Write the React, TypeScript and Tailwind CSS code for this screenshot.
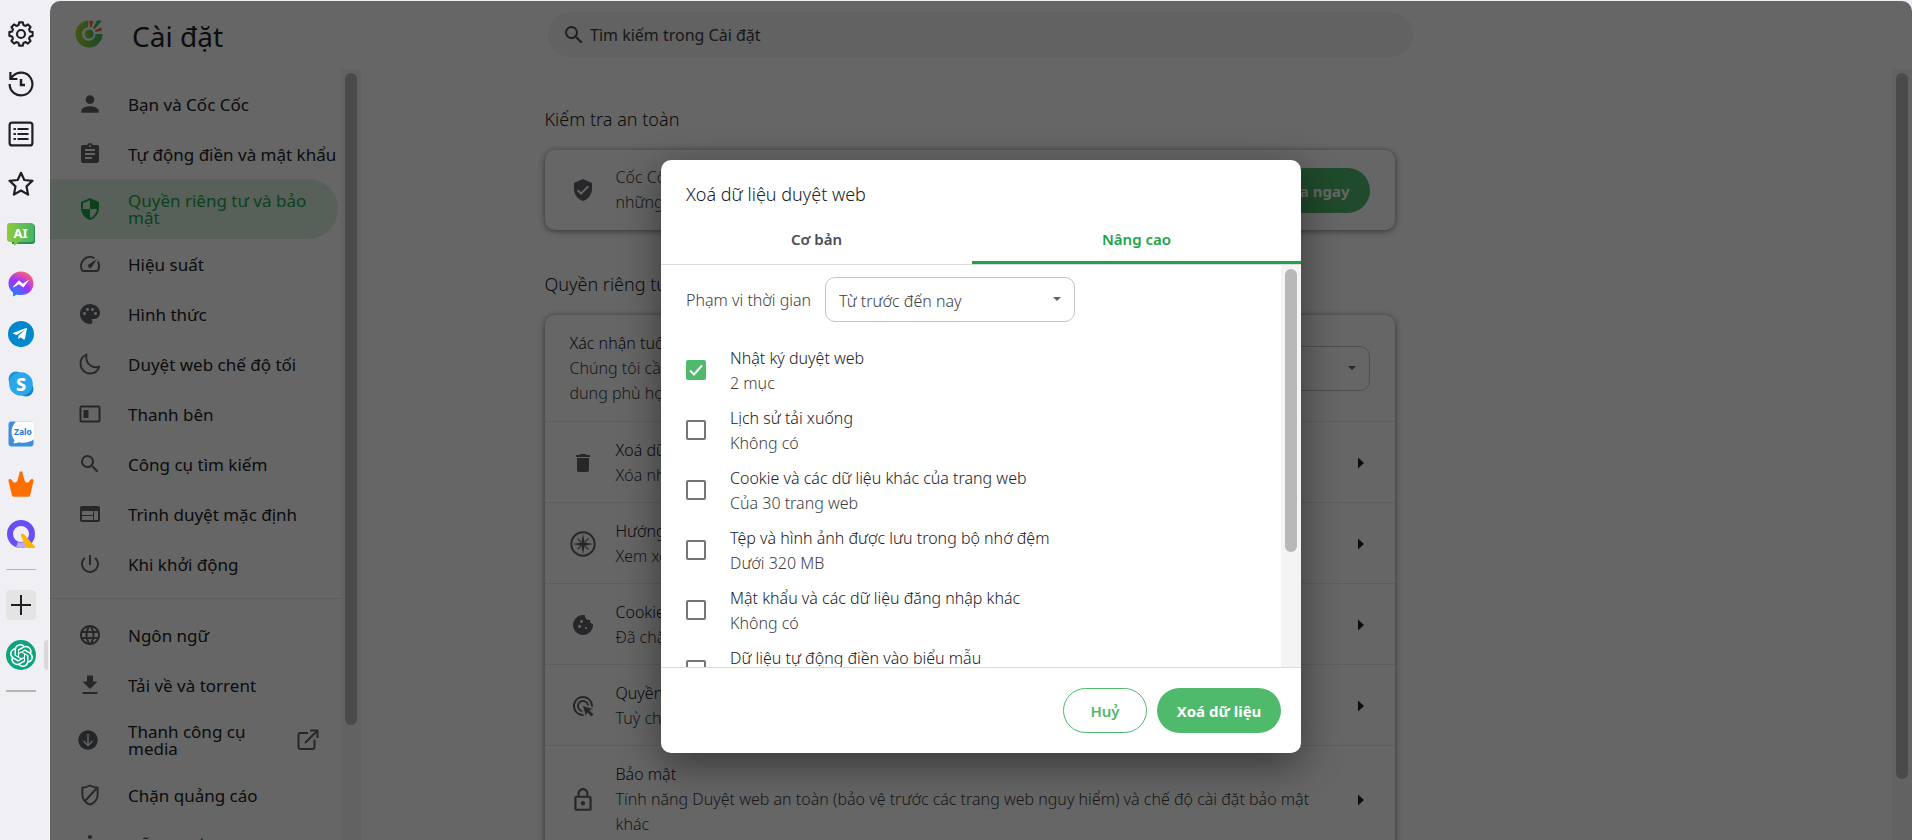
import React, { useState } from "react";
import {
  MdPerson,
  MdAssignment,
  MdSecurity,
  MdOutlineSpeed,
  MdPalette,
  MdSearch,
  MdWeb,
  MdPowerSettingsNew,
  MdLanguage,
  MdAccessibility,
  MdVerifiedUser,
  MdDelete,
  MdCookie,
  MdAdsClick,
  MdLockOutline,
} from "react-icons/md";
import { FaTelegramPlane } from "react-icons/fa";
import { SiOpenai } from "react-icons/si";

// ---------- icons ----------

// eight teeth, four points for each one
const gearPoints = Array.from({ length: 32 }, (_, i) => {
  const tooth = Math.floor(i / 4);
  const offsets = [-15, -9, 9, 15];
  const r = i % 4 === 0 || i % 4 === 3 ? 9.3 : 11.8;
  const angle = ((tooth * 45 + offsets[i % 4]) * Math.PI) / 180;
  return `${(13 + r * Math.sin(angle)).toFixed(2)},${(13 - r * Math.cos(angle)).toFixed(2)}`;
}).join(" ");

const GearIcon = () => (
  <svg viewBox="0 0 26 26" className="size-[26px]" fill="none" stroke="#1f2023" strokeWidth="2.1" strokeLinejoin="round">
    <polygon points={gearPoints} />
    <circle cx="13" cy="13" r="4" />
  </svg>
);

const HistoryIcon = () => (
  <svg viewBox="0 0 26 26" className="size-[26px]" fill="none" stroke="#1f2023" strokeWidth="2.2">
    <path d="M1.6 13a11.4 11.4 0 1 0 3.2-7.9L2.4 7.4" />
    <path d="M2.4 1v7h7" />
    <path d="M13 8v6h4" strokeWidth="2.5" />
  </svg>
);

const ListIcon = () => (
  <svg viewBox="0 0 26 26" className="size-[26px]" fill="none" stroke="#1f2023" strokeWidth="2.2">
    <rect x="1.6" y="1.6" width="22.8" height="22.8" rx="2.5" />
    <path d="M9.5 8h11M9.5 13h11M9.5 18h11" />
    <path d="M5.5 8h2.4M5.5 13h2.4M5.5 18h2.4" />
  </svg>
);

const StarIcon = () => (
  <svg viewBox="0 0 26 26" className="size-[26px]" fill="none" stroke="#1f2023" strokeWidth="2.2" strokeLinejoin="round">
    <path d="M13 1.800l3.300 7.200 8.200.8-6 5.600 1.600 8.200-7.100-4.100-7.100 4.100 1.600-8.200-6-5.600 8.200-.8z" />
  </svg>
);

const AiIcon = () => (
  <svg viewBox="0 0 28 26" className="h-[26px] w-7">
    <defs>
      <linearGradient id="ai" x1="0" x2="1">
        <stop offset="0" stopColor="#8fc93a" />
        <stop offset="1" stopColor="#45b56a" />
      </linearGradient>
    </defs>
    <path d="M4 3h21a3 3 0 0 1 3 3v14a3 3 0 0 1-3 3H5z" fill="#2e8b57" />
    <path d="M3 2h21a3 3 0 0 1 3 3v13a3 3 0 0 1-3 3H12l-5 4v-4H3a3 3 0 0 1-3-3V5a3 3 0 0 1 3-3z" fill="url(#ai)" />
    <text x="13.500" y="16.500" fontSize="13" fontWeight="700" fill="#fff" textAnchor="middle">AI</text>
  </svg>
);

const MessengerIcon = () => (
  <svg viewBox="0 0 26 26" className="size-[26px]">
    <defs>
      <radialGradient id="msg" cx="0.2" cy="1" r="1.1">
        <stop offset="0" stopColor="#0a8cff" />
        <stop offset="0.600" stopColor="#a033ff" />
        <stop offset="1" stopColor="#ff6470" />
      </radialGradient>
    </defs>
    <path d="M13 0.500C5.900.5.500 5.600.5 12.500c0 3.700 1.600 6.900 4.500 9v4l4-2c1.200.4 2.600.6 4 .6 7.100 0 12.500-5 12.500-11.600S20.100.5 13 .5z" fill="url(#msg)" />
    <path d="M5.500 16l5.300-6.200 4 3.400 5.500-3.700-5 6.500-4.300-3.300z" fill="#fff" stroke="#fff" strokeWidth="1" strokeLinejoin="round" />
  </svg>
);

const SkypeIcon = () => (
  <svg viewBox="0 0 26 26" className="size-[26px]">
    <circle cx="8" cy="8" r="7.500" fill="#1b93d8" />
    <circle cx="18" cy="18" r="7.500" fill="#1483c4" />
    <circle cx="13" cy="13" r="11.800" fill="#28a8ea" />
    <text x="13" y="19.500" fontSize="18" fontWeight="800" fill="#fff" textAnchor="middle">S</text>
  </svg>
);

const ZaloIcon = () => (
  <svg viewBox="0 0 26 26" className="size-[26px]">
    <rect x="0.500" y="0.500" width="25" height="25" rx="3" fill="#3b8fdc" />
    <path d="M8 .5h15a3 3 0 0 1 3 3V18c-4 3.500-10 4.500-15 3.200-2 .9-4 1.100-6 .8 1.200-1 1.600-2 1.400-3C2.300 14.500 2.500 6 8 .5z" fill="#fff" />
    <text x="15" y="14" fontSize="8.500" fontWeight="700" fill="#1f78d1" textAnchor="middle">Zalo</text>
  </svg>
);

const CrownIcon = () => (
  <svg viewBox="0 0 26 26" className="size-[26px]" fill="#ff6f00">
    <path d="M.4 9.500C.8 7.600 2.800 7.600 3.800 9c1 1.600 1.800 2.600 3.200 2.600 1.600 0 2.300-1.500 2.900-3.500l1.700-6.800c.4-1.300 2.400-1.300 2.800 0l1.700 6.800c.6 2 1.300 3.500 2.900 3.500 1.400 0 2.200-1 3.200-2.600 1-1.400 3-1.400 3.400.5l-3.400 14.500c-.3 1.200-.9 1.700-2 1.700H5.800c-1.100 0-1.700-.5-2-1.700z" />
  </svg>
);

const QIcon = () => (
  <svg viewBox="0 0 28 28" className="size-7">
    <circle cx="14" cy="14" r="11" fill="none" stroke="#6a4df5" strokeWidth="6" />
    <path d="M10 24.500a11 11 0 0 0 9 -.6" fill="none" stroke="#b9acf8" strokeWidth="5.500" />
    <path d="M14 13.500l3 .8 11 12.500c.4.700 0 1.200-.8 1.200h-7.500L14 16z" fill="#ffb400" />
  </svg>
);

const LogoIcon = () => (
  <svg viewBox="0 0 28 28" className="size-7">
    <defs>
      <linearGradient id="logo" x1="0" x2="1">
        <stop offset="0" stopColor="#a6d82b" />
        <stop offset="1" stopColor="#3fb765" />
      </linearGradient>
    </defs>
    <path d="M13.500.5A13.500 13.500 0 1 0 27.500 14L20.500 14A6.800 6.800 0 1 1 13.300 7.200z" fill="url(#logo)" />
    <circle cx="14" cy="14" r="4.600" fill="url(#logo)" />
    <path d="M14.600 1h3.600l-1.600 6.500h-1.400z" fill="#ff5a3c" />
    <path d="M22 .5h5l-7.500 8.800-1.600-1.100z" fill="#3fb765" />
    <path d="M26.500 7.200v3.600l-6 1.200-.5-1.600z" fill="#ff5a3c" />
  </svg>
);

const MoonIcon = () => (
  <svg viewBox="0 0 24 24" className="size-6" fill="none" stroke="currentColor" strokeWidth="1.900" strokeLinejoin="round">
    <path d="M8.500 2.500C5 4 2.500 7.500 2.500 11.800c0 5.300 4.200 9.700 9.500 9.700 4.200 0 8-2.700 9.300-7-5.600 2.500-14.600-1.800-12.800-12z" />
  </svg>
);

const SidePanelIcon = () => (
  <svg viewBox="0 0 24 24" className="size-6">
    <rect x="2.500" y="4.500" width="19" height="15" rx="1" fill="none" stroke="currentColor" strokeWidth="2" />
    <path d="M5.500 8h5v8h-5z" fill="currentColor" />
  </svg>
);

const DownloadIcon = () => (
  <svg viewBox="0 0 24 24" className="size-6" fill="currentColor">
    <path d="M9 2.500h6v6h4.500L12 16 4.500 8.500H9zM4.500 19h15v2h-15z" />
  </svg>
);

const MediaIcon = () => (
  <svg viewBox="0 0 24 24" className="-ml-1 size-6">
    <circle cx="12" cy="12" r="9.800" fill="currentColor" />
    <path d="M12 6v11.500M7.500 13l4.500 4.500 4.500-4.500" fill="none" stroke="#fff" strokeWidth="1.400" />
  </svg>
);

const ExternalIcon = () => (
  <svg viewBox="0 0 24 24" className="size-6" fill="none" stroke="currentColor" strokeWidth="2">
    <path d="M12 5H4.500C3 5 2.500 5.500 2.500 7v12c0 1.500.5 2 2 2h12c1.500 0 2-.5 2-2v-7.500" />
    <path d="M14 2.500h7.500V10M21.500 2.500L9 15" />
  </svg>
);

const AdblockIcon = () => (
  <svg viewBox="0 0 24 24" className="size-6" fill="none" stroke="currentColor" strokeWidth="1.900">
    <path d="M12 2.500c-2.500 1.400-5 2-7.600 2.200V12c0 4.500 3.500 8 7.600 9.700 4.100-1.700 7.600-5.200 7.600-9.700V4.700C17 4.500 14.500 3.900 12 2.500z" />
    <path d="M18.500 5.500L7 18" />
  </svg>
);

const CompassIcon = () => (
  <svg viewBox="0 0 24 24" className="size-[26px] shrink-0" fill="none" stroke="currentColor" strokeWidth="1.800">
    <circle cx="12" cy="12" r="10.800" />
    <path d="M12 2.500l1.500 8L21.500 12l-8 1.500L12 21.500l-1.500-8L2.500 12l8-1.500z" fill="currentColor" stroke="none" />
    <path d="M7 7l3 3M17 7l-3 3M7 17l3-3M17 17l-3-3" strokeWidth="1.100" />
  </svg>
);

const ArrowRight = () => (
  <svg viewBox="0 0 6 12" className="h-3 w-1.5 shrink-0" fill="#202124">
    <path d="M0 0.500l6 5.500-6 5.500z" />
  </svg>
);

// ---------- data ----------

const railApps = [
  { name: "Cài đặt", icon: <GearIcon /> },
  { name: "Lịch sử", icon: <HistoryIcon /> },
  { name: "Danh sách đọc", icon: <ListIcon /> },
  { name: "Dấu trang", icon: <StarIcon /> },
  { name: "AI", icon: <AiIcon /> },
  { name: "Messenger", icon: <MessengerIcon /> },
  {
    name: "Telegram",
    icon: (
      <span className="flex size-[26px] items-center justify-center rounded-full bg-[#0088cc] pr-0.5 text-white">
        <FaTelegramPlane size={16} />
      </span>
    ),
  },
  { name: "Skype", icon: <SkypeIcon /> },
  { name: "Zalo", icon: <ZaloIcon /> },
  { name: "Crown", icon: <CrownIcon /> },
  { name: "Q", icon: <QIcon /> },
];

const menu = [
  { label: "Bạn và Cốc Cốc", icon: <MdPerson size={26} /> },
  { label: "Tự động điền và mật khẩu", icon: <MdAssignment size={24} /> },
  { label: "Quyền riêng tư và bảo mật", icon: <MdSecurity size={24} />, active: true },
  { label: "Hiệu suất", icon: <MdOutlineSpeed size={24} /> },
  { label: "Hình thức", icon: <MdPalette size={24} /> },
  { label: "Duyệt web chế độ tối", icon: <MoonIcon /> },
  { label: "Thanh bên", icon: <SidePanelIcon /> },
  { label: "Công cụ tìm kiếm", icon: <MdSearch size={24} /> },
  { label: "Trình duyệt mặc định", icon: <MdWeb size={24} /> },
  { label: "Khi khởi động", icon: <MdPowerSettingsNew size={24} /> },
];

const menuMore = [
  { label: "Ngôn ngữ", icon: <MdLanguage size={24} /> },
  { label: "Tải về và torrent", icon: <DownloadIcon /> },
  { label: "Thanh công cụ media", icon: <MediaIcon />, external: true },
  { label: "Chặn quảng cáo", icon: <AdblockIcon /> },
  { label: "Hỗ trợ tiếp cận", icon: <MdAccessibility size={24} /> },
];

const privacyRows = [
  { title: "Xoá dữ liệu duyệt web", text: "Xóa nhật ký, cookie, bộ nhớ đệm và nhiều dữ liệu khác", icon: <MdDelete size={24} /> },
  { title: "Hướng dẫn về quyền riêng tư", text: "Xem xét các chế độ kiểm soát quan trọng", icon: <CompassIcon /> },
  { title: "Cookie của bên thứ ba", text: "Đã chặn cookie của bên thứ ba", icon: <MdCookie size={24} /> },
  { title: "Quyền của trang web", text: "Tuỳ chọn kiểm soát thông tin mà trang web có thể dùng", icon: <MdAdsClick size={24} /> },
  {
    title: "Bảo mật",
    text: "Tính năng Duyệt web an toàn (bảo vệ trước các trang web nguy hiểm) và chế độ cài đặt bảo mật khác",
    icon: <MdLockOutline size={26} />,
  },
];

const dataTypes = [
  { id: "history", title: "Nhật ký duyệt web", text: "2 mục" },
  { id: "downloads", title: "Lịch sử tải xuống", text: "Không có" },
  { id: "cookies", title: "Cookie và các dữ liệu khác của trang web", text: "Của 30 trang web" },
  { id: "cache", title: "Tệp và hình ảnh được lưu trong bộ nhớ đệm", text: "Dưới 320 MB" },
  { id: "passwords", title: "Mật khẩu và các dữ liệu đăng nhập khác", text: "Không có" },
  { id: "forms", title: "Dữ liệu tự động điền vào biểu mẫu", text: "Không có" },
];

// ---------- parts ----------

const Scrollbar = ({ thumb }: { thumb: string }) => (
  <div className="w-5 shrink-0 bg-[#f4f4f4] px-1 pt-1">
    <div className={`w-3 rounded-full bg-[#b8b8b8] ${thumb}`} />
  </div>
);

const SelectBox = ({ id, value, width }: { id: string; value: string; width: string }) => (
  <div className={`relative ${width}`}>
    <select
      id={id}
      aria-label={value}
      className="h-[45px] w-full appearance-none rounded-[10px] border border-[#c4c4c4] bg-white px-[13px] pt-0.5 text-base text-[#3c4043]"
    >
      <option>{value}</option>
    </select>
    <svg viewBox="0 0 8 4" className="pointer-events-none absolute top-5 right-3.5 h-1 w-2" fill="#5f6368">
      <path d="M0 0h8L4 4z" />
    </svg>
  </div>
);

const MenuItem = ({ item }) => (
  <a
    href="#"
    className={`flex w-72 items-center pl-[27px] ${
      item.active ? "h-[60px] rounded-r-full bg-[#dcefe2] text-[#1ea446]" : "text-[#202124]"
    } ${item.external ? "h-[60px]" : "h-[50px]"}`}
  >
    <span className={`flex w-[26px] shrink-0 justify-center ${item.active ? "" : "text-[#5f6368]"}`}>{item.icon}</span>
    <span className={`ml-[25px] text-[17px] leading-[17px] ${item.external ? "w-[140px]" : item.active ? "w-[190px]" : "whitespace-nowrap"}`}>
      {item.label}
    </span>
    {item.external && (
      <span className="ml-7 text-[#5f6368]">
        <ExternalIcon />
      </span>
    )}
  </a>
);

const Rail = () => (
  <nav className="flex w-[50px] shrink-0 flex-col bg-[#f0eff4] pt-[9px]">
    {railApps.map((app) => (
      <button key={app.name} aria-label={app.name} className="flex h-[50px] w-[41px] items-center justify-center">
        {app.icon}
      </button>
    ))}
    <div className="mx-1.5 mt-[10px] h-px w-[30px] bg-[#b5b5b5]" />
    <button aria-label="Thêm" className="mt-5 ml-1.5 flex size-[30px] items-center justify-center rounded bg-[#e4e4e4]">
      <svg viewBox="0 0 20 20" className="size-5" stroke="#1f2023" strokeWidth="2">
        <path d="M10 0v20M0 10h20" />
      </svg>
    </button>
    <div className="mt-5 flex justify-between pr-0.5 pl-1.5">
      <button aria-label="ChatGPT" className="flex size-[30px] items-center justify-center rounded-full bg-[#10a37f] text-white">
        <SiOpenai size={23} />
      </button>
      <div className="w-1 rounded-l bg-[#d8d8d8]" />
    </div>
    <div className="mx-1.5 mt-5 h-0.5 w-[30px] bg-[#b5b5b5]" />
  </nav>
);

const ClearDataDialog = () => {
  const [checked, setChecked] = useState({ history: true });

  const toggle = (id) => setChecked({ ...checked, [id]: !checked[id] });

  return (
    <div
      role="dialog"
      aria-labelledby="dialog-title"
      className="w-[640px] overflow-hidden rounded-[10px] bg-white shadow-[0_12px_40px_rgba(0,0,0,0.45)]"
    >
      <h2 id="dialog-title" className="px-[25px] pt-5 pb-3 text-lg leading-7 font-light text-[#202124]">
        Xoá dữ liệu duyệt web
      </h2>
      <div role="tablist" className="flex h-[45px] border-b border-[#dcdcdc] text-[15px] font-semibold">
        <button role="tab" className="flex-auto border-b-[3px] border-transparent pb-0.5 text-[#4a4d51]">
          Cơ bản
        </button>
        <button role="tab" aria-selected="true" className="flex-auto border-b-[3px] border-[#1ea446] pb-0.5 text-[#1ea446]">
          Nâng cao
        </button>
      </div>

      <div className="flex h-[402px] overflow-hidden">
        <div className="flex-1 pt-3 pl-[25px] text-base font-light">
          <div className="flex items-center gap-[15px]">
            <label htmlFor="range" className="w-[124px] whitespace-nowrap text-[#3c4043]">
              Phạm vi thời gian
            </label>
            <SelectBox id="range" value="Từ trước đến nay" width="w-[250px]" />
          </div>
          <div className="mt-[18px]">
            {dataTypes.map((item) => (
              <label key={item.id} className="flex h-[60px] items-center">
                <span className="relative flex size-5 shrink-0">
                  <input
                    type="checkbox"
                    checked={!!checked[item.id]}
                    onChange={() => toggle(item.id)}
                    className="peer size-5 appearance-none rounded-[2px] border-2 border-[#757575] checked:border-[#4fb96c] checked:bg-[#4fb96c]"
                  />
                  <svg
                    viewBox="0 0 20 20"
                    className="pointer-events-none absolute inset-0 hidden size-5 peer-checked:block"
                    fill="none"
                    stroke="#fff"
                    strokeWidth="2"
                  >
                    <path d="M4 10.500l4 4 8-9" />
                  </svg>
                </span>
                <span className="ml-6 pt-0.5 leading-[25px]">
                  <span className="block text-[#202124]">{item.title}</span>
                  <span className="block text-[#3c4043]">{item.text}</span>
                </span>
              </label>
            ))}
          </div>
        </div>
        <Scrollbar thumb="h-[71%]" />
      </div>

      <div className="flex justify-end gap-2.5 border-t border-[#dcdcdc] px-5 py-5 text-[15px]">
        <button className="h-[45px] w-[84px] rounded-full border border-[#4fb96c] pt-0.5 font-semibold text-[#4fb96c]">Huỷ</button>
        <button className="h-[45px] w-[124px] rounded-full bg-[#4fb96c] pt-0.5 font-bold text-white">Xoá dữ liệu</button>
      </div>
    </div>
  );
};

const cardClass = "rounded-[10px] bg-white shadow-[0_1px_6px_rgba(0,0,0,0.5)]";

const App = () => {
  return (
    <div className="flex h-screen overflow-hidden bg-[#f0eff4] font-['Noto_Sans',sans-serif]">
      <Rail />

      <div className="relative mt-px flex min-w-0 flex-1 flex-col overflow-hidden rounded-t-[10px] bg-white">
        <header className="flex h-[68px] shrink-0 items-start">
          <div className="flex w-[498px] items-start pt-[13px] pl-[25px]">
            <span className="pt-1.5">
              <LogoIcon />
            </span>
            <h1 className="ml-[29px] text-[28px] leading-[44px] text-[#202124]">Cài đặt</h1>
          </div>
          <div className="mt-[11px] mr-[499px] flex h-[45px] flex-1 items-center rounded-full bg-[#f4f4f4] pl-3.5">
            <MdSearch size={24} className="text-[#4a4d51]" />
            <input
              type="search"
              aria-label="Tìm kiếm trong Cài đặt"
              placeholder="Tìm kiếm trong Cài đặt"
              className="ml-1 flex-1 bg-transparent text-base placeholder:text-[#3c4043]"
            />
          </div>
        </header>

        <div className="flex min-h-0 flex-1">
          <aside className="flex shrink-0">
            <nav className="w-[291px] overflow-hidden pt-2.5">
              {menu.map((item) => (
                <MenuItem key={item.label} item={item} />
              ))}
              <div className="mt-[9px] mb-[11px] h-px bg-[#e8e8e8]" />
              {menuMore.map((item) => (
                <MenuItem key={item.label} item={item} />
              ))}
            </nav>
            <Scrollbar thumb="h-[85%]" />
          </aside>

          <main className="flex min-w-0 flex-1 justify-center overflow-hidden pr-[314px] text-base leading-[25px] font-light">
            <div className="w-full max-w-[850px]">
              <h2 className="pt-9 pb-[17px] text-lg leading-7 text-[#202124]">Kiểm tra an toàn</h2>
              <section className={`flex h-20 items-center px-[25px] ${cardClass}`}>
                <span className="flex w-[26px] justify-center text-[#5f6368]">
                  <MdVerifiedUser size={24} />
                </span>
                <p className="ml-5 flex-1 text-[#3c4043]">
                  Cốc Cốc có thể giúp bảo vệ bạn trước các vụ vi phạm dữ liệu,
                  <br />
                  những tiện ích không an toàn và nhiều vấn đề khác
                </p>
                <button className="h-[45px] rounded-full bg-[#4fb96c] px-5 pt-0.5 text-[15px] font-bold text-white">Kiểm tra ngay</button>
              </section>

              <h2 className="pt-10 pb-[17px] text-lg leading-7 text-[#202124]">Quyền riêng tư và bảo mật</h2>
              <section className={cardClass}>
                <div className="flex h-[106px] items-center px-[25px]">
                  <div className="flex-1">
                    <p className="text-[#202124]">Xác nhận tuổi</p>
                    <p className="text-[#3c4043]">
                      Chúng tôi cần xác nhận tuổi của bạn để hiển thị nội
                      <br />
                      dung phù hợp
                    </p>
                  </div>
                  <SelectBox id="age" value="Chưa xác nhận" width="w-[250px]" />
                </div>
                {privacyRows.map((row) => (
                  <a key={row.title} href="#" className="flex items-center border-t border-[#e8e8e8] pt-4 pr-[31px] pb-3.5 pl-[25px]">
                    <span className="flex w-[26px] shrink-0 justify-center text-[#5f6368]">{row.icon}</span>
                    <span className="ml-5 flex-1 pr-8">
                      <span className="block text-[#202124]">{row.title}</span>
                      <span className="block text-[#3c4043]">{row.text}</span>
                    </span>
                    <ArrowRight />
                  </a>
                ))}
              </section>
            </div>
          </main>
          <Scrollbar thumb="h-[92%]" />
        </div>

        {/* modal layer */}
        <div className="absolute inset-0 flex items-start justify-center bg-black/60 pt-[159px]">
          <ClearDataDialog />
        </div>
      </div>
    </div>
  );
};

export default App;
